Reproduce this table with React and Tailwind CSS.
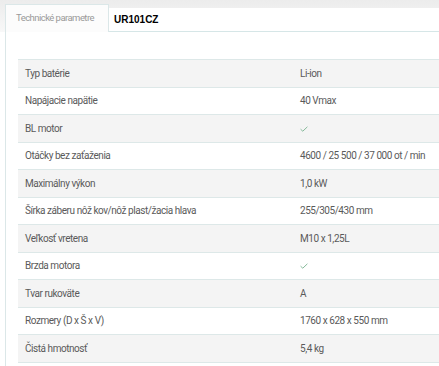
const rows = [
  ['Typ batérie', 'Li-ion'],
  ['Napájacie napätie', '40 Vmax'],
  ['BL motor', 'check'],
  ['Otáčky bez zaťaženia', '4600 / 25 500 / 37 000 ot / min'],
  ['Maximálny výkon', '1,0 kW'],
  ['Šírka záberu nôž kov/nôž plast/žacia hlava', '255/305/430 mm'],
  ['Veľkosť vretena', 'M10 x 1,25L'],
  ['Brzda motora', 'check'],
  ['Tvar rukoväte', 'A'],
  ['Rozmery (D x Š x V)', '1760 x 628 x 550 mm'],
  ['Čistá hmotnosť', '5,4 kg'],
];

const Check = () => (
  <svg width="8" height="6" viewBox="0 0 8 6" className="mt-[1px]">
    <path d="M0.6 3.2 L2.8 5.2 L7.4 0.8" fill="none" stroke="#78b28f" strokeWidth="0.9" />
  </svg>
);

const App = () => {
  return (
    <div className="w-[439px] h-[366px] overflow-hidden bg-white font-['Roboto',sans-serif]">
      {/* Tabs */}
      <div className="flex h-[32px] bg-gradient-to-b from-[#ececec] to-[#f8f8f8]">
        <div className="w-[5px]" />
        <div className="mt-[4px] w-[104px] border-l border-t border-r border-[#dbe7e8] bg-[#fcfcfc] flex items-center pl-[10px] text-[9.5px] tracking-[-0.55px] text-[#9a9a9a]">
          Technické parametre
        </div>
        <div className="flex-1 mt-[8px] bg-white border-b border-[#d6e6e7] flex items-center pl-[5px] font-['Liberation_Sans',sans-serif] font-bold text-[10px] text-black">
          UR101CZ
        </div>
      </div>

      {/* Content */}
      <div className="ml-[5px] border-l border-[#dbe7e8] h-[334px] pt-[27px] pl-[12px]">
        <div className="border-t border-[#dde8e8]">
          {rows.map(([label, value], i) => (
            <div
              key={label}
              className={`flex items-center h-[27.5px] border-b border-[#dde8e8] text-[10px] tracking-[-0.45px] text-[#5a5a5a] ${
                i % 2 === 0 ? 'bg-[#f4f4f4]' : 'bg-white'
              }`}
            >
              <div className="w-[282px] pl-[7px] whitespace-nowrap">{label}</div>
              <div className="flex-1 whitespace-nowrap">{value === 'check' ? <Check /> : value}</div>
            </div>
          ))}
        </div>
      </div>
    </div>
  );
};

export default App;
